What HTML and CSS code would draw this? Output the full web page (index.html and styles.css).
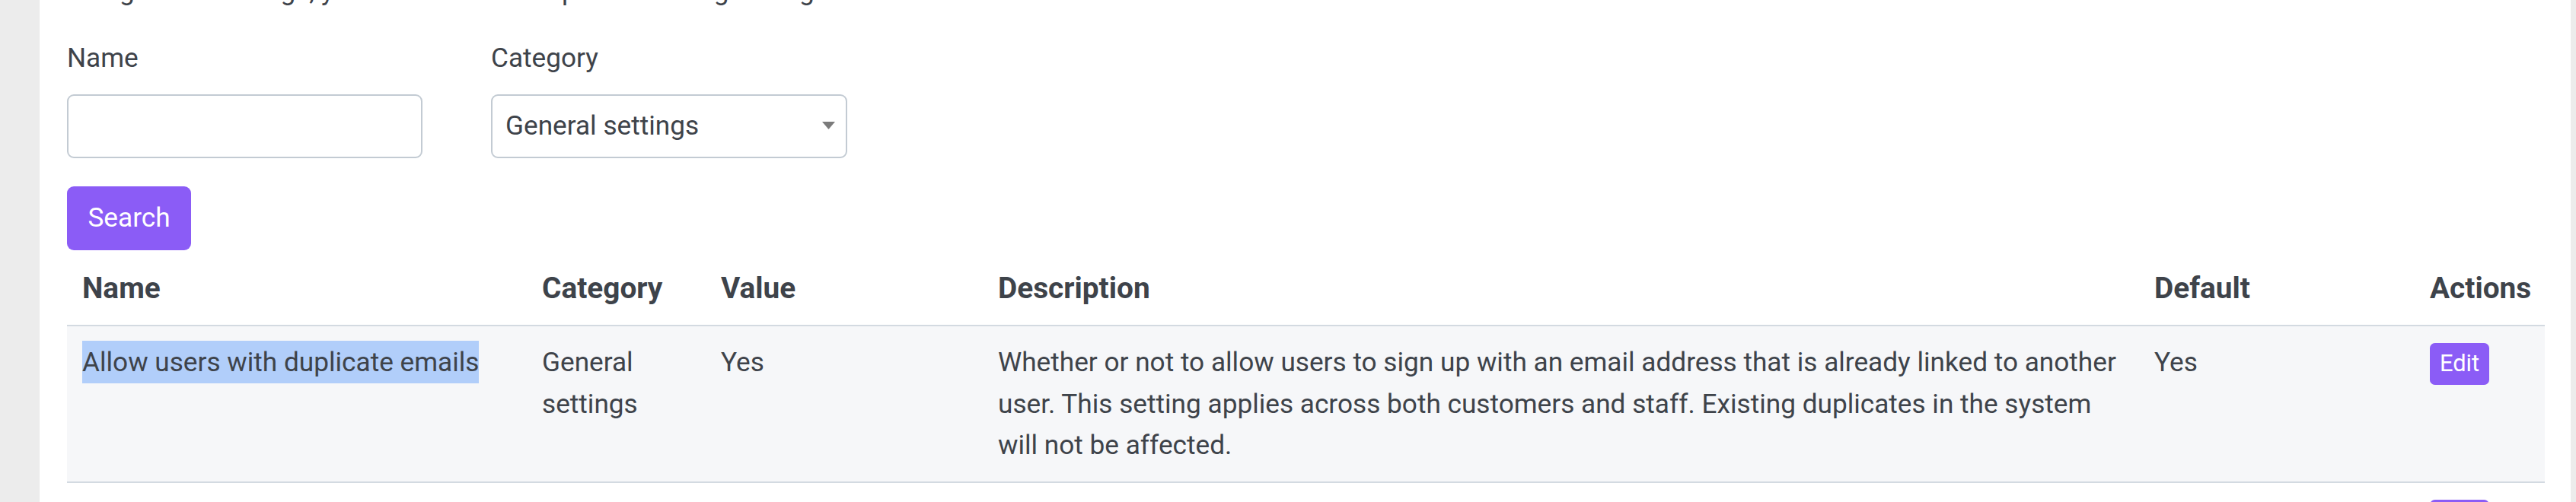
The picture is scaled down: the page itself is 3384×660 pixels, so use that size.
FILE: index.html
```html
<!DOCTYPE html>
<html>
<head>
    <title>Settings</title>
    <link rel="stylesheet" href="styles.css">
</head>
<body>
    <div class="page">
        <p class="intro">Using these settings, you can see all the specific settings using the form below.</p>

        <form class="filters">
            <div class="field">
                <label for="name">Name</label>
                <input type="text" id="name" name="name">
            </div>
            <div class="field">
                <label for="category">Category</label>
                <div class="select-wrap">
                    <select id="category" name="category">
                        <option>General settings</option>
                        <option>Booking settings</option>
                        <option>Payment settings</option>
                    </select>
                    <svg class="select-arrow" width="17" height="10" viewBox="0 0 17 10"><path d="M0 0H17L8.5 10Z" fill="#7b7b7b"/></svg>
                </div>
            </div>
        </form>
        <button class="search-btn" type="button">Search</button>

        <table class="settings">
            <colgroup>
                <col class="col-name">
                <col class="col-category">
                <col class="col-value">
                <col class="col-description">
                <col class="col-default">
                <col class="col-actions">
            </colgroup>
            <thead>
                <tr>
                    <th>Name</th>
                    <th>Category</th>
                    <th>Value</th>
                    <th>Description</th>
                    <th>Default</th>
                    <th>Actions</th>
                </tr>
            </thead>
            <tbody>
                <tr>
                    <td><span class="picked">Allow users with duplicate emails</span></td>
                    <td>General settings</td>
                    <td>Yes</td>
                    <td>Whether or not to allow users to sign up with an email address that is already linked to another user. This setting applies across both customers and staff. Existing duplicates in the system will not be affected.</td>
                    <td>Yes</td>
                    <td><button class="edit-btn" type="button">Edit</button></td>
                </tr>
                <tr>
                    <td></td>
                    <td></td>
                    <td></td>
                    <td></td>
                    <td></td>
                    <td><button class="edit-btn" type="button">Edit</button></td>
                </tr>
            </tbody>
        </table>
    </div>
</body>
</html>
```

FILE: styles.css
```css
body {
    margin: 0;
    background-color: #ececec;
    font-family: Roboto, "Noto Sans", sans-serif;
    font-size: 35.2px;
    line-height: 52.8px;
    color: #3e434a;
}
.page {
    margin: 0 7px 0 52px;
    padding: 0 34px 0 36px;
    background-color: #fff;
    min-height: 660px;
    overflow: hidden;
}
.intro {
    margin: -38px 0 35px;
}
.filters {
    display: flex;
    gap: 90px;
    margin: 0;
}
.field {
    display: flex;
    flex-direction: column;
}
.field label {
    margin-bottom: 21px;
}
.field input,
.select-wrap select {
    box-sizing: border-box;
    width: 467px;
    height: 84px;
    border: 2px solid #c3cbd3;
    border-radius: 9px;
    background-color: #fff;
    font: inherit;
    color: inherit;
    padding: 0 17px;
    margin: 0;
}
.select-wrap {
    position: relative;
}
.select-wrap select {
    width: 468px;
    appearance: none;
    -webkit-appearance: none;
}
.select-arrow {
    position: absolute;
    top: 36px;
    right: 16px;
}
.search-btn {
    display: block;
    margin-top: 37px;
    height: 84px;
    width: 163px;
    padding: 0;
    border: none;
    border-radius: 9px;
    background-color: #8b5cf6;
    color: #fff;
    font: inherit;
}
.settings {
    width: 100%;
    border-collapse: collapse;
    table-layout: fixed;
}
.col-name { width: 604px; }
.col-category { width: 235px; }
.col-value { width: 364px; }
.col-description { width: 1519px; }
.col-default { width: 362px; }
.col-actions { width: 171px; }
.settings th {
    text-align: left;
    font-size: 38.8px;
    font-weight: 700;
    line-height: 52.8px;
    padding: 24px 20px 22px;
    border-bottom: 2px solid #d3dae1;
}
.settings td {
    padding: 20px;
    line-height: 54.5px;
    vertical-align: top;
    border-bottom: 2px solid #d3dae1;
}
.settings tbody tr:nth-child(odd) {
    background-color: #f6f7f9;
}
.picked {
    background-color: #b1cefa;
    padding: 7px 0;
}
.edit-btn {
    font-family: inherit;
    font-size: 30.8px;
    line-height: 46.2px;
    padding: 4.4px 13px;
    border: none;
    border-radius: 6.6px;
    background-color: #8b5cf6;
    color: #fff;
}
```
